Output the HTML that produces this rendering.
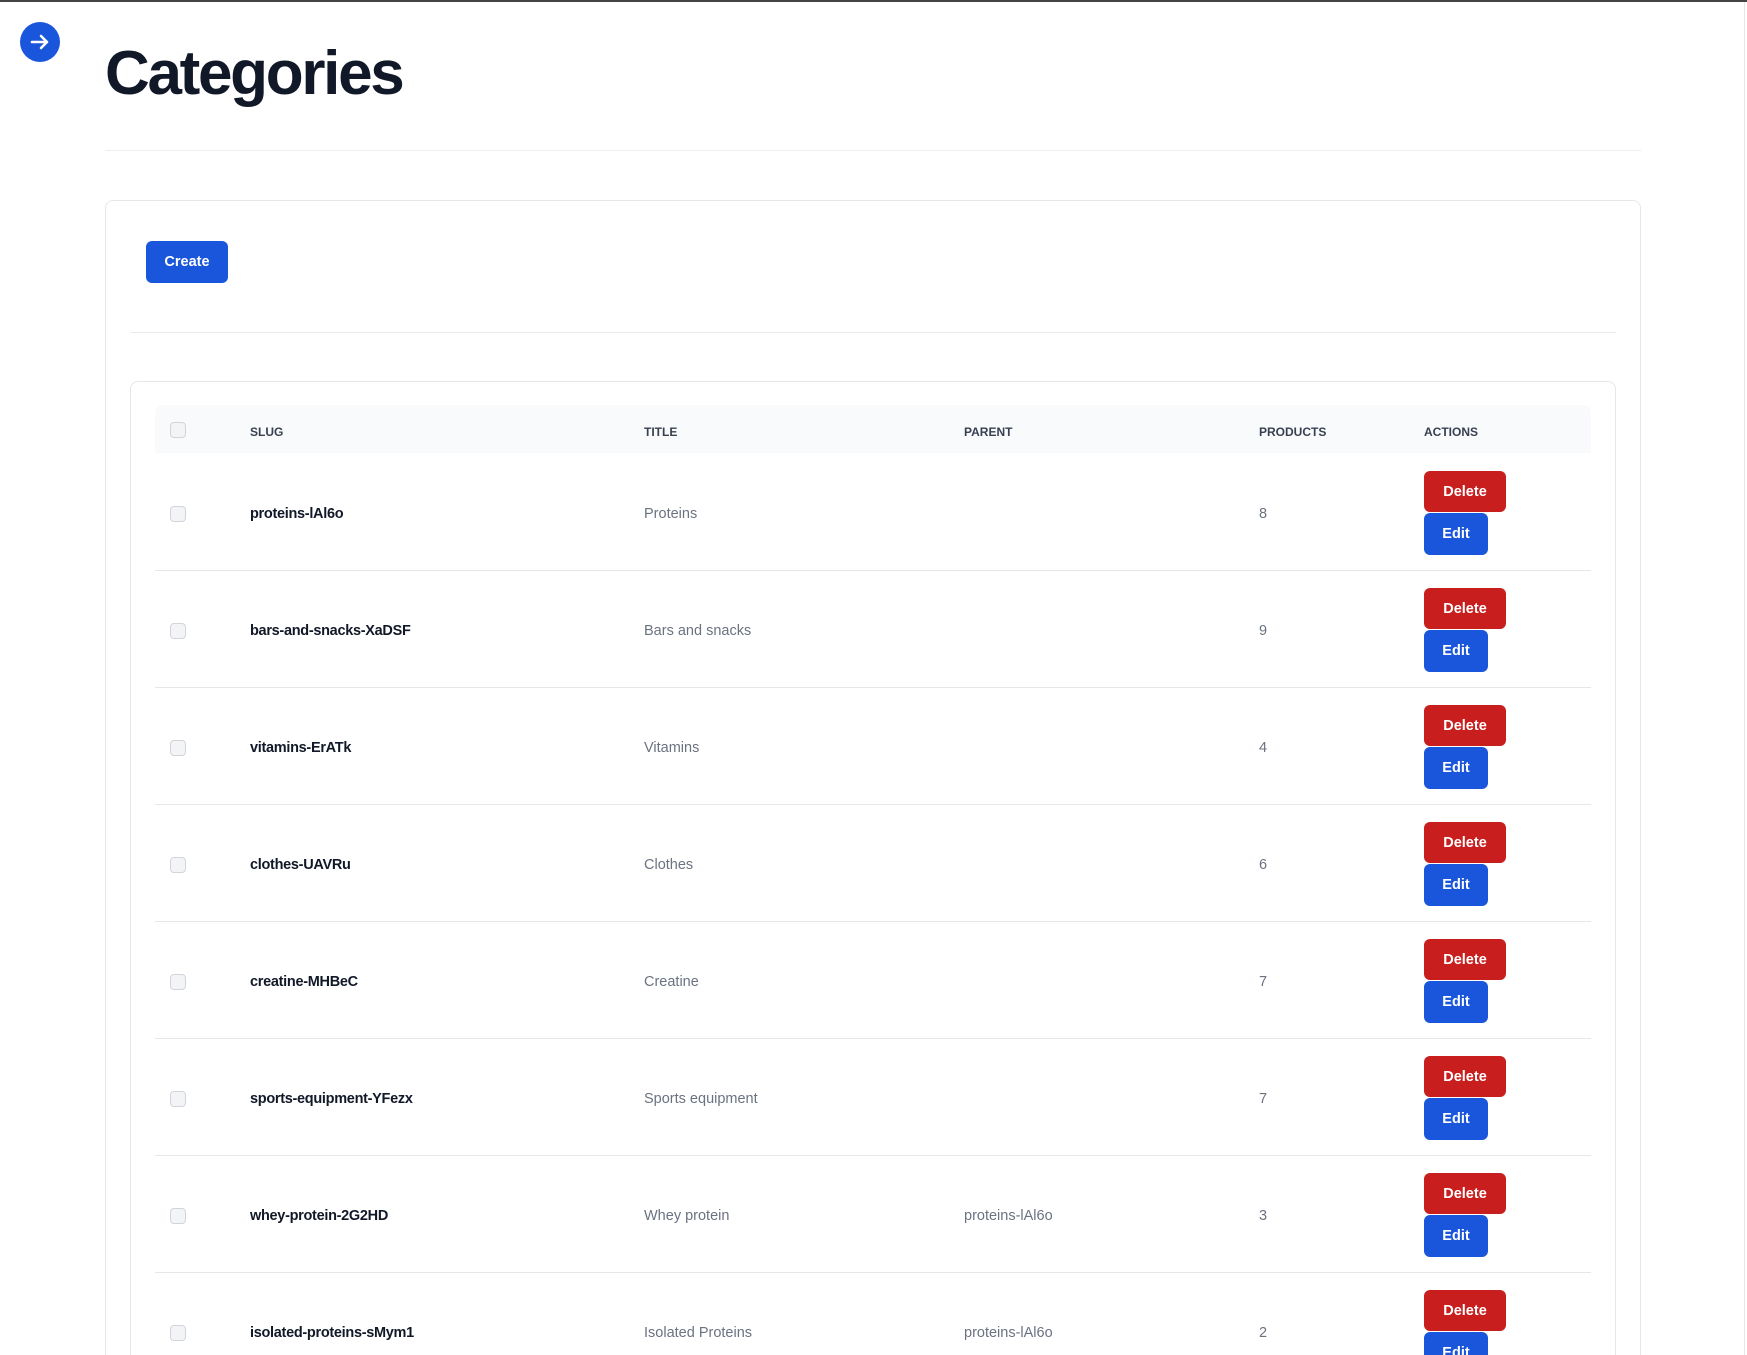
<!DOCTYPE html>
<html><head><meta charset="utf-8"><style>
*{box-sizing:border-box;margin:0;padding:0}
html,body{width:1747px;height:1355px;overflow:hidden;background:#fff;font-family:"Liberation Sans",sans-serif;position:relative}
#wrap{position:absolute;left:0;top:0;width:1747px;height:1355px;overflow:hidden}
.topbar{position:absolute;left:0;top:0;width:1747px;height:2px;background:#444}
.rline{position:absolute;left:1744px;top:2px;width:1px;height:1353px;background:#e5e7eb}
.circ{position:absolute;left:20px;top:22px;width:40px;height:40px;border-radius:50%;background:#1a56db}
h1{position:absolute;left:105px;top:38px;font-size:62px;font-weight:700;color:#111827;letter-spacing:-2.3px;line-height:72px}
.hr{position:absolute;left:105px;top:150px;width:1536px;height:1px;background:#eceef1}
.card{position:absolute;left:105px;top:200px;width:1536px;height:1300px;border:1px solid #e5e7eb;border-radius:8px}
.btn{position:absolute;color:#fff;font-size:14.5px;font-weight:700;border-radius:6px;text-align:center}
.create{left:146px;top:241px;width:82px;height:42px;line-height:43px;background:#1a56db}
.div{position:absolute;left:130px;top:332px;width:1486px;height:1px;background:#e9eaec}
.inner{position:absolute;left:130px;top:381px;width:1486px;height:1200px;border:1px solid #e5e7eb;border-radius:8px}
.thead{position:absolute;left:155px;top:405px;width:1436px;height:48px;background:#f9fafb;border-radius:8px 8px 0 0}
.th{position:absolute;font-size:12px;font-weight:700;color:#374151;top:425px}
.cb{position:absolute;left:170px;width:16px;height:16px;border:1px solid #d1d5db;border-radius:4px;background:#f3f4f6}
.sep{position:absolute;left:155px;width:1436px;height:1px;background:#e5e7eb}
.td{position:absolute;font-size:14.5px;color:#6b7280}
.slug{color:#111827;font-weight:700;letter-spacing:-0.3px}
.del{background:#c81e1e;width:82px;height:41px;line-height:42px;left:1424px}
.edit{background:#1a56db;width:64px;height:42px;line-height:43px;left:1424px}
</style></head><body><div id="wrap">
<div class="topbar"></div><div class="rline"></div>
<div class="circ"><svg width="40" height="40" viewBox="0 0 40 40"><path d="M12 20h15M21 14l6 6-6 6" stroke="#fff" stroke-width="2.6" fill="none" stroke-linecap="round" stroke-linejoin="round"/></svg></div>
<h1>Categories</h1>
<div class="hr"></div>
<div class="card"></div>
<div class="btn create">Create</div>
<div class="div"></div>
<div class="inner"></div>
<div class="thead"></div>
<div class="cb" style="top:422px"></div>
<div class="th" style="left:250px">SLUG</div>
<div class="th" style="left:644px">TITLE</div>
<div class="th" style="left:964px">PARENT</div>
<div class="th" style="left:1259px">PRODUCTS</div>
<div class="th" style="left:1424px">ACTIONS</div>
<div id="rows"></div>
</div>
<script>
var d=[["proteins-lAl6o","Proteins","","8"],["bars-and-snacks-XaDSF","Bars and snacks","","9"],["vitamins-ErATk","Vitamins","","4"],["clothes-UAVRu","Clothes","","6"],["creatine-MHBeC","Creatine","","7"],["sports-equipment-YFezx","Sports equipment","","7"],["whey-protein-2G2HD","Whey protein","proteins-lAl6o","3"],["isolated-proteins-sMym1","Isolated Proteins","proteins-lAl6o","2"]];
var h="";
d.forEach(function(r,i){var t=453+i*117;var c=t+59;
h+='<div class="cb" style="top:'+(c-6)+'px"></div>';
h+='<div class="td slug" style="left:250px;top:'+(c-6)+'px">'+r[0]+'</div>';
h+='<div class="td" style="left:644px;top:'+(c-6)+'px">'+r[1]+'</div>';
h+='<div class="td" style="left:964px;top:'+(c-6)+'px">'+r[2]+'</div>';
h+='<div class="td" style="left:1259px;top:'+(c-6)+'px">'+r[3]+'</div>';
h+='<div class="btn del" style="top:'+(t+18)+'px">Delete</div>';
h+='<div class="btn edit" style="top:'+(t+60)+'px">Edit</div>';
h+='<div class="sep" style="top:'+(t+117)+'px"></div>';});
document.getElementById("rows").innerHTML=h;
</script>
</body></html>
